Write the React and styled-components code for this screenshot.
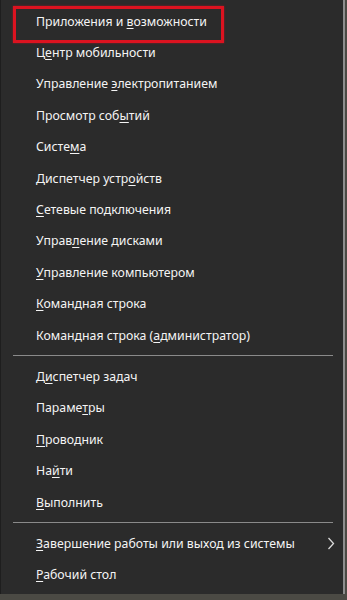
import React from 'react';
import styled, { createGlobalStyle } from 'styled-components';

const GlobalStyle = createGlobalStyle`
  html, body {
    margin: 0;
    padding: 0;
    background: #55524a;
  }
`;

const Page = styled.div`
  width: 347px;
  height: 600px;
  overflow: hidden;
  background: #4b4a44;
`;

const Menu = styled.ul`
  list-style: none;
  margin: 0;
  padding: 5.5px 0 0;
  width: 345px;
  height: 594px;
  box-sizing: border-box;
  background: #2b2b2b;
  border-left: 1px solid #1e1e1e;
  border-right: 2px solid #8e8e8e;
  font-family: 'Noto Sans', 'Open Sans', sans-serif;
  font-size: 12.3px;
  color: #f4f4f4;
`;

const Item = styled.li`
  position: relative;
  display: flex;
  align-items: center;
  justify-content: space-between;
  height: 31.4px;
  padding: 0 8px 0 35px;
  box-sizing: border-box;
  white-space: nowrap;
`;

const Key = styled.span`
  text-decoration: underline;
  text-underline-offset: 2px;
`;

const Highlight = styled.span`
  position: absolute;
  left: 12px;
  top: 0;
  width: 211px;
  height: 37px;
  box-sizing: border-box;
  border: 3px solid #dc1320;
  box-shadow: 0 0 2px rgba(220, 19, 32, 0.6);
  pointer-events: none;
`;

const Separator = styled.li`
  height: 10px;
  display: flex;
  align-items: center;
  padding: 0 10px 0 12px;
  &::before {
    content: '';
    flex: 1;
    height: 1px;
    background: #8a8a8a;
  }
`;

const Chevron = () => (
  <svg width="8" height="13" viewBox="0 0 8 13">
    <path d="M1.5 1 L6.5 6.5 L1.5 12" fill="none" stroke="#d8d8d8" strokeWidth="1.3" />
  </svg>
);

// label split: [before, key, after]
const groups = [
  [
    ['Приложения и ', 'в', 'озможности'],
    ['Ц', 'е', 'нтр мобильности'],
    ['Управление ', 'э', 'лектропитанием'],
    ['Просмотр соб', 'ы', 'тий'],
    ['Систе', 'м', 'а'],
    ['Диспетчер устр', 'о', 'йств'],
    ['', 'С', 'етевые подключения'],
    ['Управ', 'л', 'ение дисками'],
    ['', 'У', 'правление компьютером'],
    ['', 'К', 'омандная строка'],
    ['Командная строка (', 'а', 'дминистратор)'],
  ],
  [
    ['Д', 'и', 'спетчер задач'],
    ['Параме', 'т', 'ры'],
    ['', 'П', 'роводник'],
    ['На', 'й', 'ти'],
    ['', 'В', 'ыполнить'],
  ],
  [
    ['', 'З', 'авершение работы или выход из системы', true],
    ['', 'Р', 'абочий стол'],
  ],
];

export default function App() {
  return (
    <Page>
      <GlobalStyle />
      <Menu>
        {groups.map((group, gi) => (
          <React.Fragment key={gi}>
            {gi > 0 && <Separator />}
            {group.map(([a, k, b, sub], i) => (
              <Item key={a + k + b}>
                {gi === 0 && i === 0 && <Highlight />}
                <span>
                  {a}
                  <Key>{k}</Key>
                  {b}
                </span>
                {sub && <Chevron />}
              </Item>
            ))}
          </React.Fragment>
        ))}
      </Menu>
    </Page>
  );
}
